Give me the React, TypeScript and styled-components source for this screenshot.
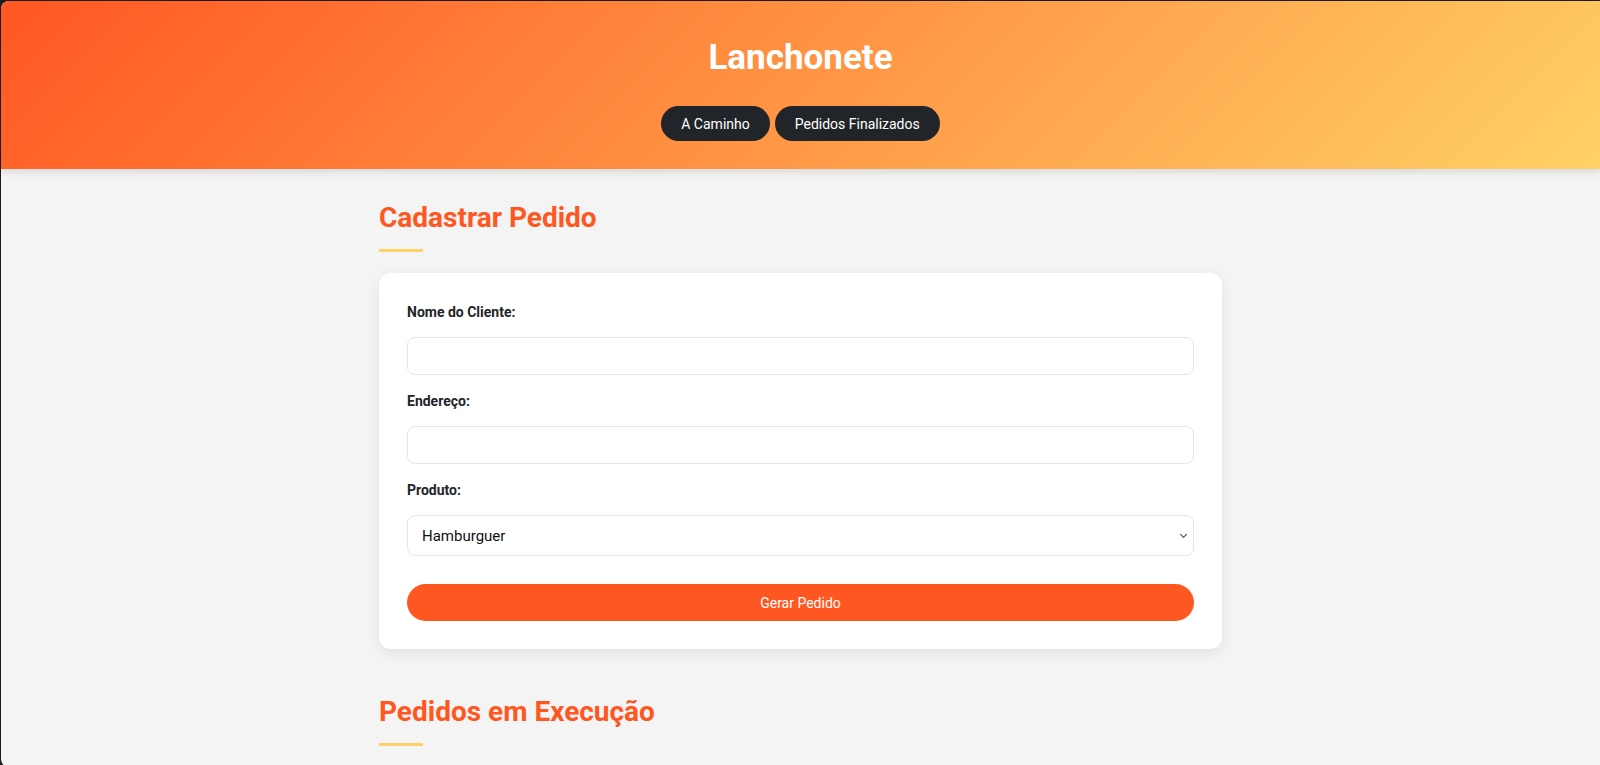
import React from "react";
import styled, { createGlobalStyle } from "styled-components";

const GlobalStyle = createGlobalStyle`
  html, body { margin: 0; padding: 0; background: #1b1b1b; }
  body { font-family: Roboto, "Noto Sans", Arial, sans-serif; }
  * { box-sizing: border-box; }
`;

const Page = styled.div`
  margin: 1px 0 0 1px;
  min-height: 764px;
  background: #f4f4f4;
  border-top-left-radius: 8px;
  border-bottom-left-radius: 8px;
  overflow: hidden;
`;

const Header = styled.header`
  height: 168px;
  background: linear-gradient(135deg, #ff5722 0%, #ffd166 100%);
  box-shadow: 0 3px 8px rgba(0, 0, 0, 0.12);
  display: flex;
  flex-direction: column;
  align-items: center;
  padding-top: 36px;
  position: relative;
  z-index: 1;
`;

const Title = styled.h1`
  margin: 0;
  color: #fff;
  font-size: 35px;
  font-weight: 700;
  line-height: 42px;
`;

const Nav = styled.nav`
  display: flex;
  gap: 5px;
  margin-top: 27px;
`;

const NavButton = styled.button`
  height: 35px;
  padding: 0 20px;
  border: none;
  border-radius: 18px;
  background: #212529;
  color: #fff;
  font-family: Roboto, Arial, sans-serif;
  font-size: 14px;
  cursor: pointer;
`;

const Main = styled.main`
  width: 843px;
  margin: 0 auto;
  padding-top: 32px;
`;

const SectionTitle = styled.h2`
  margin: 0;
  color: #ff5722;
  font-size: 28px;
  font-weight: 700;
  line-height: 34px;
`;

const Bar = styled.div`
  width: 44px;
  height: 3px;
  background: #ffd166;
  margin-top: 14px;
  margin-bottom: 21px;
`;

const Card = styled.form`
  background: #fff;
  border-radius: 12px;
  box-shadow: 0 4px 14px rgba(0, 0, 0, 0.08);
  padding: 29px 28px 28px;
  display: flex;
  flex-direction: column;
  margin-bottom: 46px;
`;

const Label = styled.label`
  display: block;
  font-size: 14px;
  font-weight: 700;
  line-height: 21px;
  color: #212529;
  margin-bottom: 14px;
`;

const Input = styled.input`
  display: block;
  width: 100%;
  height: 38px;
  border: 1px solid #e6e6e6;
  border-radius: 8px;
  margin-bottom: 16px;
  padding: 0 14px;
  font-family: Roboto, Arial, sans-serif;
  font-size: 15px;
  background: #fff;
`;

const SelectWrap = styled.div`
  position: relative;
  margin-bottom: 28px;
`;

const Select = styled.select`
  display: block;
  width: 100%;
  height: 41px;
  border: 1px solid #e6e6e6;
  border-radius: 8px;
  padding: 0 14px;
  font-family: Roboto, Arial, sans-serif;
  font-size: 15px;
  color: #111;
  background: #fff;
  appearance: none;
`;

const Chevron = styled.svg`
  position: absolute;
  right: 6px;
  top: 16px;
  width: 9px;
  height: 9px;
  pointer-events: none;
`;

const Submit = styled.button`
  height: 37px;
  border: none;
  border-radius: 19px;
  background: #ff5722;
  color: #fff;
  font-family: Roboto, Arial, sans-serif;
  font-size: 14px;
  cursor: pointer;
`;

export default function App() {
  return (
    <>
      <GlobalStyle />
      <Page>
        <Header>
          <Title>Lanchonete</Title>
          <Nav>
            <NavButton type="button">A Caminho</NavButton>
            <NavButton type="button">Pedidos Finalizados</NavButton>
          </Nav>
        </Header>
        <Main>
          <SectionTitle>Cadastrar Pedido</SectionTitle>
          <Bar />
          <Card onSubmit={(e) => e.preventDefault()}>
            <Label htmlFor="nome">Nome do Cliente:</Label>
            <Input id="nome" type="text" />
            <Label htmlFor="endereco">Endereço:</Label>
            <Input id="endereco" type="text" />
            <Label htmlFor="produto">Produto:</Label>
            <SelectWrap>
              <Select id="produto" defaultValue="Hamburguer">
                <option>Hamburguer</option>
                <option>Pizza</option>
                <option>Batata Frita</option>
              </Select>
              <Chevron viewBox="0 0 10 10">
                <path d="M1.5 3.5 L5 7 L8.5 3.5" fill="none" stroke="#555" strokeWidth="1.3" />
              </Chevron>
            </SelectWrap>
            <Submit type="submit">Gerar Pedido</Submit>
          </Card>
          <SectionTitle>Pedidos em Execução</SectionTitle>
          <Bar />
        </Main>
      </Page>
    </>
  );
}
